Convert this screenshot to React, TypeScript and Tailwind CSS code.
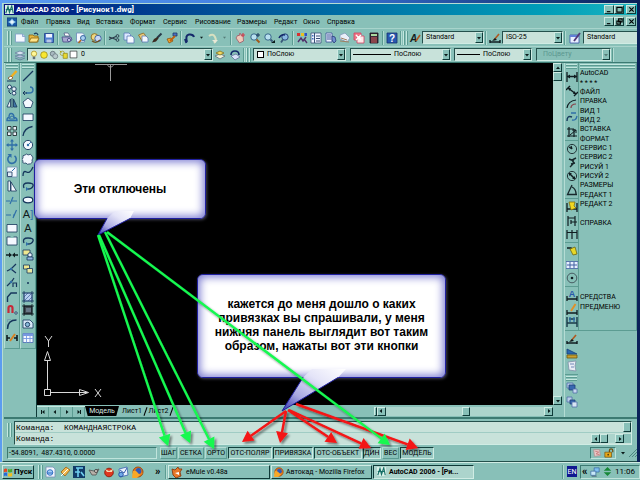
import React from 'react'

const N = '#16365c'
const B = '#2f6fa8'

const line = (d: string, c = N, w = 1.2) => <path d={d} stroke={c} strokeWidth={w} fill="none" />
const fill = (d: string, c: string, s = 'none') => <path d={d} fill={c} stroke={s} strokeWidth={0.8} />
const dot = (x: number, y: number, r: number, c: string, s = 'none') => (
  <circle cx={x} cy={y} r={r} fill={c} stroke={s} strokeWidth={0.9} />
)

const glyphs: Record<string, React.ReactNode> = {
  // standard toolbar
  new: <>{fill('M1.5 2h7l2.5 2.5V10h-9.5z', '#f4f8ff', '#7f9cc8')}{fill('M8.5 2v2.5H11', '#b8cce8', '#7f9cc8')}</>,
  open: <>{fill('M1 3h4l1 1h4v6H1z', '#e8b840', '#8a6410')}{fill('M3 6h8l-2 4H1z', '#ffe48a', '#8a6410')}{line('M6 2q3-2 4 1', N)}</>,
  save: <>{fill('M1.5 1.5h9v9h-9z', '#4f7fd0', '#1f3f88')}{fill('M3 2h6v3.5H3z', '#f0f4ff')}{fill('M3.5 7.5h5v3h-5z', '#b8c8e8')}</>,
  print: <>{fill('M3 1h4l2 3H4z', '#fff', '#56608a')}{fill('M1 5h9l1 3-3 2H2z', '#a8a8d0', '#4a4a88')}{dot(8, 8, 1.6, '#d0d0f0', '#4a4a88')}</>,
  preview: <>{fill('M1.5 1h6l2 2v7h-8z', '#f4f8ff', '#6a86b8')}{dot(8, 6, 2.5, '#a8d0f0', '#2a5a98')}{line('M6 8l-2.5 3', '#b06820', 1.6)}</>,
  publish: <>{dot(4.5, 5, 3.4, '#f0d880', '#8a6a20')}{dot(8, 6.5, 3.2, '#c8d8f8', '#3a5a98')}{line('M2 9q4 3 8-1', '#705020')}</>,
  cut: <>{line('M1 5l7 2.5M1 7.5L8 4.5', '#283848', 1.2)}{dot(9.5, 4, 1.4, 'none', '#283848')}{dot(9.5, 8, 1.4, 'none', '#283848')}</>,
  copy: <>{fill('M1 1h5l1.5 1.5V8H1z', '#dce8ff', '#5a7ab8')}{fill('M4 4h5l2 2v5H4z', '#f4f8ff', '#5a7ab8')}</>,
  paste: <>{fill('M1.5 3l5-2 4 5-5 4z', '#e8c878', '#8a6420')}{fill('M5 4h4l2 2v4H5z', '#f4f8ff', '#5a7ab8')}</>,
  match: <>{line('M10.5 1.5L6 6', '#283848', 2)}{fill('M6.5 5L3 7l-2 3.5 4-1 2.5-3z', '#3a2a20')}</>,
  blockedit: <>{fill('M1 7l4-1 2 3-4 2z', '#f0a830', '#8a5010')}{fill('M7 1h4v3H7z', '#4a70c0', '#20386a')}{line('M9 4L4 9', '#c06010', 1.8)}</>,
  undo: line('M3 10Q1 3 5 2.5T10 5M2.4 11L1 7', '#14286a', 2),
  redo: <>{line('M2 4q4-3 6 1t-1 6', '#d8e0c0', 2)}{fill('M5 8h6l-3 3z', '#e8e8d8')}</>,
  drop: fill('M4 5h4L6 7.5z', '#0a1a1a'),
  pan: <>{fill('M2 6l2-3 1 1 1-3 1.5 3L9 3l.5 6-4 2z', '#f0c8b8', '#a05868')}{line('M9 1v4M7 3h4', '#d04050')}</>,
  zoom: <>{dot(5, 5, 3.2, '#b8e0f0', '#2a5a80')}{line('M7.5 7.5l3 3', '#a05818', 1.8)}{line('M9 1v4M7 3h4', N, 1)}</>,
  zoomw: <>{dot(5, 5, 3.2, '#b8e0f0', '#2a5a80')}{line('M7.5 7.5l2 2', '#385878', 1.8)}{fill('M8 11h4V8z', '#0a1a1a')}</>,
  zoomp: <>{dot(7, 5, 3.2, '#88b8e0', '#203a70')}{line('M5 7.5l-2 3', '#385878', 1.8)}{line('M1 6q2-4 6-3', '#14286a', 1.5)}</>,
  props: <>{fill('M1 1h3v3H1z', '#d83030')}{fill('M5 1h3v3H5z', '#e8c020')}{fill('M8.5 1h2.500v3h-2.500z', '#3050c8')}{line('M2 10l3-4 2 3 3-4M8 7l3 4', '#50306a', 1.4)}</>,
  dcenter: <>{fill('M1 1h10v10H1z', '#eef4ff', '#3a5078')}{line('M4.500 1v10M6 4h4M6 6.500h4M6 9h4', '#3a5078', 1)}{fill('M2 3h1.500v1.500H2zM2 6h1.500v1.500H2z', '#4070c0')}</>,
  palette: <>{fill('M1 1h6v9H1z', '#eef4ff', '#3a5098')}{line('M2 3h4M2 5h4M2 7h4', '#3a5098', 1)}{fill('M7 4l3 1 1 4-2 2-2-3z', '#7090d0', '#2a3a78')}</>,
  sheet: <>{fill('M1 3l5-2 5 5-3 4-7-3z', '#e8eef8', '#8098b8')}{line('M2 6l6 2M1 9l9 1', '#a08060', 1)}</>,
  markup: <>{fill('M1 1h7v7H1z', '#f07888', '#d04060')}{fill('M4 4h7v7H4z', '#ffe8e8', '#d04060')}{line('M3 3l5 5M8 3L3 8', '#fff', 1.5)}</>,
  calc: <>{fill('M2 1h8v10H2z', '#3a2a38', '#1a1020')}{fill('M3 2h6v2H3z', '#a8d8a0')}{line('M3 6h6M3 8h6M3 10h6', '#d86060', 1)}</>,
  help: <>{fill('M1 1h10v10H1z', '#2858b0', '#143070')}<text x="6" y="10" textAnchor="middle" fontSize="10" fontWeight="700" fontFamily="Liberation Sans, sans-serif" fill="#fff">?</text></>,
  textstyle: <><text x="4.500" y="9.500" textAnchor="middle" fontSize="10" fontWeight="700" fontStyle="italic" fontFamily="Liberation Sans, sans-serif" fill="#101c20">A</text>{line('M11 3L7 9', '#b05820', 1.6)}</>,
  dimstyle: <>{line('M1 10h10M1 8v3M11 8v3', '#101c20', 1.4)}{line('M10 2L5 8', '#b05820', 1.6)}{fill('M3 9l3-3 2 2z', '#101c20')}</>,
  tablestyle: <>{fill('M1 3h9v8H1z', '#e8f0ff', '#3850a8')}{fill('M1 3h9v2H1z', '#6080d8')}{line('M11 1L5 9', '#503878', 1.8)}</>,
  // layers
  layers: <>{fill('M1 4l5-2 5 2-5 2z', '#d8e4f0', '#6880a0')}{fill('M1 7l5 2 5-2-5-1z', '#b8c8e0', '#6880a0')}{line('M1 9l5 2 5-2', '#6880a0', 1)}</>,
  bulb: <>{dot(6, 4.500, 3.200, '#fff898', '#a89020')}{fill('M4.500 8h3v3h-3z', '#607078')}</>,
  sun: dot(6, 6, 4, '#f8e830', '#988810'),
  freeze: <>{dot(4.500, 4.500, 3, '#a8b8c0', '#586870')}{dot(7.500, 7.500, 3, '#b8c8cc', '#687880')}</>,
  lock: <>{dot(4, 4, 2.600, 'none', '#a8a020')}{fill('M5 4h5v6H5z', '#e8d830', '#888010')}{line('M1 1l2 2', '#a8a020')}</>,
  swatch: fill('M1.500 1.500h9v9h-9z', '#fff', '#101818'),
  laycur: <>{fill('M1 7l5-2 5 2-5 3z', '#f0f0d8', '#607080')}{fill('M2 4l4-2 4 2-4 2z', '#f0d860', '#807020')}</>,
  layprev: <>{fill('M2 7l5-2 4 3-5 3z', '#d8e0f8', '#607098')}{line('M2 6q0-4 4-4t4 4', '#14286a', 1.600)}</>,
  // modify
  erase: <>{line('M10.500 1L5 7', '#f0b020', 2.400)}{fill('M2 8l3-2 2 2-3 2z', '#fff', '#805020')}{line('M1 11h9', N, 1)}</>,
  copyobj: <>{dot(3.500, 3, 2, '#e8f0f8', N)}{dot(8, 5, 2.200, '#e8f0f8', N)}{dot(8, 9.200, 1.900, '#e8f0f8', N)}{line('M3 6v2l2 2', N, 1)}</>,
  mirror: <>{fill('M4.500 2v8H1z', '#e8f0f8', N)}{fill('M7.500 2v8H11z', '#4078a8', N)}{line('M6 1v10', N, 0.800)}</>,
  offset: <>{line('M1 9.500h10q0-3-3-3 0-4-3-4-2 0-2 4-2 0-2 3z', B, 1.400)}{line('M3.500 8h5Q8 5 6 5T3.500 8', B, 1)}</>,
  array: <>{fill('M1.500 1.500h3.500v3.500H1.500zM7 1.500h3.500v3.500H7zM1.500 7h3.500v3.500H1.500zM7 7h3.500v3.500H7z', '#e8f0f8', '#101c20')}</>,
  move: <>{line('M6 1v10M1 6h10', B, 1.300)}{fill('M6 0l2 2.500H4zM6 12l2-2.500H4zM0 6l2.500-2v4zM12 6L9.500 4v4z', B)}</>,
  rotate: <>{line('M4 2.500A4.200 4.200 0 1 0 8.500 2.800', B, 1.600)}{fill('M1.500 1h4v4z', B)}</>,
  scale: <>{fill('M1 1h10v10H1z', '#f4f8ff', '#7090b0')}{fill('M1.500 6H6v4.500H1.500z', '#e0ecf8', N)}{line('M6 5l3-3', B, 1)}</>,
  stretch: <>{fill('M2 1h2.500v10H2z', '#e8f0f8', N)}{fill('M5 2l5.500 9H5z', '#f4f8ff', N)}</>,
  trim: line('M0 7h4M6 7h5M7 3L4 10', B, 1.200),
  extend: line('M0 7h5M7 7h2M10.500 2L7 10', B, 1.200),
  breakpt: fill('M1 2.500h10v7.500H1z', '#f4f8ff', N),
  breakobj: <>{fill('M1 2h10v8H1z', '#f4f8ff', N)}{fill('M4.500 1h3v2h-3z', '#88c0b8')}</>,
  join: <>{line('M0 6h4M8 6h4', '#101c20', 1.400)}{fill('M3 3.500L6 6 3 8.500zM9 3.500L6 6l3 2.500z', '#101c20')}</>,
  chamfer: <>{line('M1 8l4-2 5-5M5 6l5 4', N, 1.200)}{dot(5, 6, 1.200, B)}</>,
  peditr: <>{line('M1 9l5-5 2-3', N, 1.200)}{line('M7 10V6h3.500v4', N, 1.200)}{dot(5, 5, 1.200, B)}</>,
  chamf: line('M1.500 11V6L5 2h6', N, 1.400),
  magnet: <>{line('M2.500 9V4q0-2 2-2t2 2v5', '#c82838', 2.200)}{dot(10, 9, 1.200, '#e8f0f8', N)}</>,
  fillet: <>{line('M1.500 11q0-9 9-9', N, 1.500)}{line('M1.500 4V1.500H5', '#78a0b0', 1)}</>,
  explode: <>{line('M1 3v6M11 3v6M1 6h3M8 6h3', '#101c20', 1.600)}{line('M9 2L4 9', '#d88020', 2)}</>,
  // draw
  line: line('M1 11L11 1', N, 1.300),
  pline: <>{line('M4 9h3q4 0 4-3T8 3', B, 1.400)}{line('M1 9h4M1 9l2-2M1 9l2 2', N, 1)}</>,
  polygon: fill('M6 1l5 4-2 5.500H3L1 5z', '#f4f8ff', N),
  rect: fill('M1 3h10v6.500H1z', '#f4f8ff', N),
  arc: line('M1 11Q2 3 10.500 1.500', N, 1.300),
  circle: <>{dot(6, 6, 4.600, '#f4f8ff', N)}{dot(6, 6, 1.200, B)}{line('M6 6l3-3', B, 0.900)}</>,
  cloud: fill('M3 2q2-2 3 0 3-2 4 1 2 2 0 4 1 4-3 4-2 1-3-1-4 1-3-2-2-2 0-3-1-3 2-3z', '#f4f8ff', N),
  spline: line('M1 10q0-6 3.500-4T11 1', N, 1.300),
  earc: <>{line('M2 8Q0 3 6 3t5 3-5 3', N, 1.300)}{fill('M4 7l3 2-3 2z', B)}</>,
  ellipse: <ellipse cx="6" cy="6" rx="4.800" ry="2.800" fill="#f4f8ff" stroke={N} strokeWidth="1.200" />,
  insert: <>{fill('M1 1h7v5H1z', '#f0e890', N)}{dot(8, 6, 2.200, '#e8f0f8', N)}{fill('M5 8h6v3H5z', '#90b8e0', N)}</>,
  block: <>{fill('M1.500 2h6v4h-6z', '#f0e890', N)}{fill('M5 5.500h5.500v4.500H5z', '#e8e8a0', N)}</>,
  point: dot(6, 6, 1, N),
  hatch: <>{fill('M2 2h8v8H2z', '#b8d0f0', '#4a68a0')}{line('M2 6l4-4M2 10l8-8M6 10l4-4', '#4a68a0', 0.800)}{line('M0 2h12M0 10h12M2 0v12M10 0v12', N, 0.800)}</>,
  gradient: <>{fill('M2 2h8v8H2z', '#404850', '#101820')}{fill('M4 4h5v4H4z', '#687888')}{line('M0 2h12M0 10h12M2 0v12M10 0v12', '#101820', 0.800)}</>,
  region: <>{fill('M1 2h7l3 3v5H1z', '#d8e8f8', N)}{dot(5.500, 6.500, 2.200, '#88b8d8', N)}</>,
  table: <>{fill('M1 1.500h10v9H1z', '#f4f8ff', '#4868b0')}{fill('M1 1.500h10v2.500H1z', '#7898e0')}{line('M4.500 2v8.500M8 2v8.500M1 6.500h10', '#7898e0', 0.900)}</>,
  // dimension
  dlin: <>{line('M1 1v10M11 1v10M1 5.500h10', '#101c20', 1.300)}{fill('M1 5.500L4 3.500v4zM11 5.500L8 3.500v4z', '#101c20')}</>,
  dali: <>{line('M2 3l8 6M0 5l4-4M8 11l4-4', '#101c20', 1.400)}{fill('M2 3h3L3.500 6zM10 9H7l1.500-3z', '#101c20')}</>,
  darc: <>{line('M1 10Q2 3 10 2', '#101c20', 1.200)}{line('M5 10q0-4 5-4', '#884048', 1.200)}</>,
  dord: <>{line('M1 9q0-6 5-4', '#18385c', 1.400)}{line('M6 8q4 1 5-4M5 1l5 0', B, 1.300)}</>,
  dbase: <>{line('M3 1v10M1 3h7M8 3v8M1 10h10', '#101c20', 1.200)}{line('M4 9l6-5M6 4l4 0v3', '#101c20', 1)}</>,
  drad: <>{dot(6, 6, 4.600, 'none', '#18282c')}{line('M6 6L3 4M6 6l-1-3', '#101c20', 1.300)}</>,
  djog: line('M10 1L6 3l2 3-4 4M3 2l5 2M5 7l4-1', '#18282c', 1.400),
  ddia: <>{dot(6, 6, 4.600, 'none', '#18282c')}{line('M3 3l6 6', '#101c20', 1.500)}{fill('M3 3h3L3 6zM9 9H6l3-3z', '#101c20')}</>,
  dang: line('M6 1L1.500 10.500H11M6 3q4 2 4 7', '#18282c', 1.300),
  quick: <>{line('M1 2v9M11 2v9M1 8h10', '#101c20', 1.300)}{fill('M3 1h6l-1 4 2 2-5 2z', '#f0d820', '#807010')}</>,
  dcon: line('M2 1v10M9 1v4M2 3h7M5 7h6M9 5v6M5 9V5', '#101c20', 1.200),
  dchain: line('M1 2v9M6 2v9M11 2v9M1 4.500h10', '#101c20', 1.200),
  lead: <>{line('M1 3h4l5 6', '#101c20', 1.600)}{fill('M4 4l5-2 2 7-4 1z', '#e8d828', '#706810')}</>,
  tol: <>{fill('M0 2.500h12v7H0z', '#e8f0ff', '#4060a0')}{line('M4 3v6M8 3v6M1 6h10', '#4060a0', 1)}</>,
  cmark: <>{dot(6, 6, 4.800, 'none', '#405058')}{dot(6, 6, 1.300, '#101c20')}</>,
  dedit: <><text x="6" y="7.500" textAnchor="middle" fontSize="9" fontWeight="700" fontFamily="Liberation Sans, sans-serif" fill="#2858a8">A</text>{line('M1 7v5M11 7v5M1 10h10', '#101c20', 1.300)}</>,
  dtedit: <>{line('M1 7v5M11 7v5M1 10h10', '#101c20', 1.300)}{line('M9.500 1L5 8', '#e09028', 2)}</>,
  dupd: <>{line('M1 1v10M11 1v10M1 7h10M3 3h6', '#183848', 1.400)}{line('M4 1v5M8 1v5', B, 1.400)}</>,
  solid: <>{fill('M1 2v5h10z', '#2868b0', '#184078')}{fill('M1 8h10v3H1z', '#c8a030', '#705810')}</>,
  scroll: <>{fill('M2 2l8-1-1 5 1 5-7-1z', '#e8ecf4', '#8090a8')}{line('M4 4h4M5 7h3', '#7088b8', 1)}</>,
  front: <>{fill('M1 1h6v5H1z', '#b8cce8', '#5070a8')}{fill('M3 3h6v5H3z', '#3868b0', '#204078')}{fill('M7 7h4v4H7z', '#c8d8f0', '#5070a8')}</>,
  back: <>{fill('M1 1h5v5H1z', '#b8cce8', '#5070a8')}{fill('M4 4h5v4H4z', '#3868b0', '#204078')}{fill('M6 6h5v5H6z', '#d8e4f4', '#5070a8')}</>,
  // windows and tray
  acad: <>{fill('M0 0h12v12H0z', '#d8f0e8')}{line('M1 11L4 2l2 8 3-9 2 10M1 6h9', '#187068', 1.500)}</>,
  doc: <>{fill('M0 1h12v10H0z', '#1858a8', '#103868')}{line('M6 2v8M2 6h8', '#a8e0f8', 1.600)}{fill('M4 4h4v4H4z', '#e8f8ff')}</>,
  winflag: <>{fill('M1 3q2-2 4-.5V6Q3 5 1 6.500z', '#e84820')}{fill('M6 2.500q2 1 5-.5v4q-3 1-5 0z', '#48a830')}{fill('M1 7.500Q3 6 5 7v4q-2-1.500-4 0z', '#2868d8')}{fill('M6 7.500q2 1 5-.5v4q-3 1-5 0z', '#f0c020')}</>,
  ie: <>{fill('M2 1h7l2 2v8H2z', '#f0f4fc', '#7890b8')}{dot(6, 6.500, 2.800, '#a8d0f8', '#2868c0')}{line('M3 7h6', '#2868c0', 1)}</>,
  tag: <>{fill('M2 6l5-5 4 3-5 6z', '#f0b850', '#a06010')}{line('M2 10l7-7', '#fff', 1)}</>,
  fish: <>{fill('M0 0h12v12H0z', '#103a68')}{line('M3 2h7M5 2v9M2 6h5M8 6l3 4', '#70d0f0', 1.600)}</>,
  bird: <>{fill('M1 4l5 1 5-2-3 6-4 0z', '#b8b0a8', '#505050')}{dot(8, 5, 1.500, '#e8e0d8', '#404040')}</>,
  red: <>{dot(6, 6.500, 4.300, '#e03820', '#901808')}{fill('M2 3l4 2 4-2-1 3H4z', '#f8d8b0')}</>,
  mail: <>{fill('M2 3l8-2 1 8-8 2z', '#e8f0fc', '#3860b0')}{line('M3 4l4 3 3-5', '#3860b0', 1)}{dot(4, 8.500, 2.300, '#70a8e8', '#2050a0')}</>,
  fox: <>{dot(6, 6, 5, '#e87818', '#984008')}{dot(6.500, 5, 2.900, '#3058b8')}{fill('M1 5q3-1 5 2t5 0-5 4-5-6z', '#f8a828')}</>,
  emule: <>{fill('M1 3l3 1 3-3 1 2 3 0-2 3 1 4-5 2-3-3z', '#e87828', '#803008')}{fill('M4 7l4-1v3z', '#fff')}</>,
  seal: <>{fill('M2 2h7l1 7-7 1z', '#e8c8c8', '#b08888')}{line('M4 4l4 1-3 2 4 1', '#c87070', 1)}</>,
  padlock: <>{line('M6.500 6V3q0-2 2-2t2 2v2', '#705010', 1.500)}{fill('M1 5h8v6H1z', '#e8a818', '#705010')}{dot(5, 8, 1, '#503808')}</>,
  net: <>{fill('M5 1h6v5H5z', '#80c0f0', '#3060a0')}{fill('M1 5h6v5H1z', '#c8e8f8', '#3060a0')}{line('M2 11h6', '#506878')}</>,
  updown: fill('M6 0l5 5H1zM6 12L1 7h10z', '#188838'),
}

const Icon = ({ n, s = 'size-[12px]' }: { n: string; s?: string }) => (
  <svg viewBox="0 0 12 12" className={`${s} shrink-0`} aria-hidden="true">{glyphs[n]}</svg>
)

const raised = 'border border-t-[#d0ece4] border-l-[#d0ece4] border-b-[#0f3a38] border-r-[#0f3a38]'
const sunken = 'border border-t-[#3c7a72] border-l-[#3c7a72] border-b-[#c0e4dc] border-r-[#c0e4dc]'

const Tool = ({ n }: { n: string }) => (
  <button aria-label={n} className="flex min-h-0 min-w-0 flex-1 items-center justify-center"><Icon n={n} /></button>
)
const Group = ({ items, w }: { items: string[]; w: string }) => (
  <div className={`flex h-full shrink-0 ${w}`}>{items.map(n => <Tool key={n} n={n} />)}</div>
)
const Sep = () => <div className="mx-[1px] h-[14px] w-[2px] shrink-0 border-l border-r border-l-[#5c9c92] border-r-[#b4dcd4]" />
const Grip = () => (
  <div className="flex h-[14px] shrink-0 gap-[1px]">
    <i className="w-[2px] border-l border-r border-l-[#c4e8e0] border-r-[#5c9c92]" />
    <i className="w-[2px] border-l border-r border-l-[#c4e8e0] border-r-[#5c9c92]" />
  </div>
)
const HGrip = () => (
  <div className="mx-[1px] flex shrink-0 flex-col gap-[1px] pt-[1px]">
    <i className="h-[2px] border-t border-b border-t-[#c4e8e0] border-b-[#5c9c92]" />
    <i className="h-[2px] border-t border-b border-t-[#c4e8e0] border-b-[#5c9c92]" />
  </div>
)
const Tri = ({ d }: { d: string }) => (
  <svg viewBox="0 0 6 6" className="size-[6px]" aria-hidden="true"><path d={d} fill="#0a1a1a" /></svg>
)
const DOWN = 'M1 2h4L3 4.500z', UP = 'M1 4h4L3 1.500z', LEFT = 'M4 1v4L1.500 3z', RIGHT = 'M2 1v4l2.500-2z'

const Combo = ({ label, value, w, children, disabled }: {
  label: string; value: string; w: string; children?: React.ReactNode; disabled?: boolean
}) => (
  <label className={`flex h-[13px] items-center border border-t-[#24504c] border-l-[#24504c] border-b-[#d0ece4] border-r-[#d0ece4] ${w} ${disabled ? 'bg-[#88c0b8]' : 'bg-[#c8e2da]'}`}>
    {children}
    <select aria-label={label} disabled={disabled} className={`h-[11px] min-w-0 flex-1 appearance-none bg-transparent pl-[3px] leading-[11px] outline-none ${disabled ? 'text-[#5c9890]' : 'text-black'}`}>
      <option>{value}</option>
    </select>
    <span className={`flex h-[11px] w-[8px] shrink-0 items-center justify-center bg-[#88c0b8] ${raised}`}>
      {disabled ? <span className="opacity-40"><Tri d={DOWN} /></span> : <Tri d={DOWN} />}
    </span>
  </label>
)

const WinButtons = ({ mid }: { mid: string }) => (
  <div className="mr-[1px] ml-auto flex">
    {[['Свернуть', 'M1 6.500h4'], ['Развернуть', mid], ['Закрыть', 'M1.500 1.500l5 5M6.500 1.500l-5 5']].map(([l, d], i) => (
      <button key={l} aria-label={l} className={`flex h-[9px] w-[10px] items-center justify-center bg-[#88c0b8] ${raised} ${i === 2 ? 'ml-[2px]' : ''}`}>
        <svg viewBox="0 0 8 8" className="size-[7px]"><path d={d} stroke="#000" strokeWidth="1.300" fill="none" /></svg>
      </button>
    ))}
  </div>
)

const menus: [string, string][] = [
  ['Файл', 'w-[25px]'], ['Правка', 'w-[31px]'], ['Вид', 'w-[19px]'], ['Вставка', 'w-[34px]'], ['Формат', 'w-[33px]'],
  ['Сервис', 'w-[32px]'], ['Рисование', 'w-[42px]'], ['Размеры', 'w-[37px]'], ['Редакт', 'w-[29px]'], ['Окно', 'w-[24px]'], ['Справка', 'w-[34px]'],
]
const modify = ['erase', 'copyobj', 'mirror', 'offset', 'array', 'move', 'rotate', 'scale', 'stretch', 'trim', 'extend', 'breakpt', 'breakobj', 'join', 'chamfer', 'peditr', 'chamf', 'magnet', 'fillet', 'explode']
const draw = ['line', 'pline', 'polygon', 'rect', 'arc', 'circle', 'cloud', 'spline', 'earc', 'ellipse', 'A]', 'A', 'earc', 'insert', 'block', 'point', 'hatch', 'gradient', 'region', 'table']
const dims: [string, string[]][] = [
  ['h-[69px]', ['dlin', 'dali', 'darc', 'dord', 'dbase']],
  ['h-[55px]', ['drad', 'djog', 'ddia', 'dang']],
  ['h-[41px]', ['quick', 'dcon', 'dchain']],
  ['h-[41px]', ['lead', 'tol', 'cmark']],
  ['h-[41px]', ['dedit', 'dtedit', 'dupd']],
  ['h-[41px]', ['dimstyle', 'solid', 'scroll']],
]
const sideMenu = ['AutoCAD', '* * * *', 'ФАЙЛ', 'ПРАВКА', 'ВИД 1', 'ВИД 2', 'ВСТАВКА', 'ФОРМАТ', 'СЕРВИС 1', 'СЕРВИС 2', 'РИСУЙ 1', 'РИСУЙ 2', 'РАЗМЕРЫ', 'РЕДАКТ 1', 'РЕДАКТ 2', '', 'СПРАВКА', '', '', '', '', '', '', '', 'СРЕДСТВА', 'ПРЕДМЕНЮ']
const toggles: [string, string, boolean][] = [
  ['ШАГ', 'w-[17px]', false], ['СЕТКА', 'w-[26px]', false], ['ОРТО', 'w-[22px]', false], ['ОТС-ПОЛЯР', 'w-[44px]', true],
  ['ПРИВЯЗКА', 'w-[40px]', true], ['ОТС-ОБЪЕКТ', 'w-[48px]', true], ['ДИН', 'w-[18px]', true], ['ВЕС', 'w-[17px]', false], ['МОДЕЛЬ', 'w-[34px]', true],
]

const Column = ({ items }: { items: string[] }) => (
  <div className="flex h-[286px] w-[16px] flex-col border-r border-b border-l border-b-[#5c9c92] border-l-[#b4dcd4] border-r-[#5c9c92]">
    <HGrip />
    <div className="flex min-h-0 flex-1 flex-col pb-[3px]">
      {items.map((n, i) => glyphs[n]
        ? <Tool key={i} n={n} />
        : <button key={i} className="flex min-h-0 flex-1 items-center justify-center font-['Liberation_Sans',sans-serif] text-[11px] text-[#101c20]">{n === 'A]' ? <>A<span className="text-[#2f6fa8]">]</span></> : n}</button>)}
    </div>
  </div>
)

const ScrollBtn = ({ d, l }: { d: string; l: string }) => (
  <button aria-label={l} className={`flex size-[9px] shrink-0 items-center justify-center bg-[#88c0b8] ${raised}`}><Tri d={d} /></button>
)

const Toolbars = () => (
  <>
    <div className="flex h-[18px] shrink-0 items-center border-t border-t-[#a8d4cc] pl-[3px]">
      <Grip />
      <div className="w-[1px]" />
      <Group w="w-[43px]" items={['new', 'open', 'save']} /><Sep />
      <Group w="w-[43px]" items={['print', 'preview', 'publish']} /><Sep />
      <Group w="w-[72px]" items={['cut', 'copy', 'paste', 'match', 'blockedit']} /><Sep />
      <Group w="w-[14px]" items={['undo']} /><div className="flex w-[9px]"><Icon n="drop" s="size-[9px]" /></div>
      <Group w="w-[14px]" items={['redo']} /><div className="flex w-[9px] opacity-40"><Icon n="drop" s="size-[9px]" /></div>
      <Sep />
      <Group w="w-[58px]" items={['pan', 'zoom', 'zoomw', 'zoomp']} /><Sep />
      <Group w="w-[86px]" items={['props', 'dcenter', 'palette', 'sheet', 'markup', 'calc']} /><Sep />
      <Group w="w-[14px]" items={['help']} /><Sep />
      <Grip />
      <Group w="w-[14px]" items={['textstyle']} />
      <Combo label="Текстовый стиль" value="Standard" w="w-[62px]" />
      <Sep />
      <Group w="w-[14px]" items={['dimstyle']} />
      <Combo label="Размерный стиль" value="ISO-25" w="w-[61px]" />
      <Sep />
      <Group w="w-[16px]" items={['tablestyle']} />
      <label className="flex h-[13px] min-w-0 flex-1 items-center overflow-hidden border border-r-0 border-t-[#24504c] border-l-[#24504c] border-b-[#d0ece4] bg-[#c8e2da]">
        <select aria-label="Стиль таблиц" className="h-[11px] w-full appearance-none bg-transparent pl-[3px] leading-[11px] outline-none"><option>Standard</option></select>
      </label>
    </div>
    <div className="flex h-[17px] shrink-0 items-center border-t border-b border-t-[#a8d4cc] border-b-[#3c7a72] pl-[3px]">
      <Grip />
      <Group w="w-[15px]" items={['layers']} />
      <Combo label="Слой" value="0" w="w-[186px]">
        <span className="flex items-center pl-[1px]">
          <Icon n="bulb" s="size-[10px]" /><Icon n="sun" s="size-[10px]" /><Icon n="freeze" s="size-[10px]" /><Icon n="lock" s="size-[10px]" /><Icon n="swatch" s="size-[9px]" />
        </span>
      </Combo>
      <Group w="w-[29px]" items={['laycur', 'layprev']} />
      <Sep />
      <Grip />
      <div className="w-[2px]" />
      <Combo label="Цвет" value="ПоСлою" w="w-[93px]"><span className="ml-[3px] size-[7px] border border-black bg-white" /></Combo>
      <div className="w-[4px]" />
      <Combo label="Тип линий" value="ПоСлою" w="w-[101px]"><span className="ml-[2px] h-[1px] w-[38px] bg-black" /></Combo>
      <div className="w-[3px]" />
      <Combo label="Вес линий" value="ПоСлою" w="w-[78px]"><span className="ml-[2px] h-[1px] w-[23px] bg-black" /></Combo>
      <div className="w-[4px]" />
      <Combo label="Стиль печати" value="ПоЦвету" w="w-[75px]" disabled><span className="w-[3px]" /></Combo>
      <Sep />
    </div>
  </>
)

const Drawing = () => (
  <div className="flex min-w-0 flex-1 flex-col border-l border-l-[#0f3a38]">
    <div className="flex min-h-0 flex-1">
      <div className="flex min-w-0 flex-1 flex-col justify-between bg-black">
        <svg viewBox="0 0 34 22" className="ml-[58px] h-[22px] w-[34px]" aria-hidden="true">
          <path d="M0 1.500h32M15.500 1v17M12.500 2.500l3 2 3-2" stroke="#9a9a9a" fill="none" />
        </svg>
        <svg viewBox="0 0 62 68" className="mb-[4px] ml-[5px] h-[68px] w-[62px]" aria-hidden="true">
          <g stroke="#d8d8d8" fill="none">
            <path d="M2.500 56.500h6v6h-6zM5.500 56V27M9 59.500h36M2.500 27.500h6l-3-9zM37.500 56.500v6l9-3zM3 3l3.500 5L10 3M6.500 8v6M53 56l6 8M59 56l-6 8" />
          </g>
        </svg>
      </div>
      <div className="flex w-[9px] flex-col bg-[#acd4cc]">
        <ScrollBtn l="Вверх" d={UP} />
        <div className={`h-[9px] bg-[#88c0b8] ${raised}`} />
        <div className="flex-1" />
        <ScrollBtn l="Вниз" d={DOWN} />
      </div>
    </div>
    <div className="flex h-[12px] items-center">
      <div className="flex w-[48px] border-t border-t-[#c4e8e0]">
        {[['Первый', 'M4.500 1v4L2 3zM1 1h1v4H1z'], ['Назад', LEFT], ['Вперёд', RIGHT], ['Последний', 'M1.500 1v4L4 3zM4 1h1v4H4z']].map(([l, d]) => (
          <button key={l} aria-label={l} className="flex h-[10px] flex-1 items-center justify-center border-r border-r-[#5c9c92]"><Tri d={d} /></button>
        ))}
      </div>
      <button className="h-[10px] w-[34px] bg-black text-center leading-[10px] text-[#d8e8e4] [clip-path:polygon(0_0,100%_0,92%_100%,8%_100%)]">Модель</button>
      <button className="h-[10px] w-[26px] text-center leading-[10px]">Лист1</button>
      <span className="h-[9px] w-[1px] rotate-[20deg] bg-black" />
      <button className="h-[10px] w-[25px] text-center leading-[10px]">Лист2</button>
      <span className="h-[9px] w-[1px] rotate-[20deg] bg-black" />
      <div className="flex min-w-0 flex-1 justify-end">
        <div className="flex w-[46%] bg-[#acd4cc]">
          <div className={`w-[3px] bg-[#88c0b8] ${raised}`} />
          <ScrollBtn l="Влево" d={LEFT} />
          <div className="flex-1" />
          <div className={`w-[8px] bg-[#88c0b8] ${raised}`} />
          <div className="w-[74px]" />
          <ScrollBtn l="Вправо" d={RIGHT} />
        </div>
        <div className="w-[9px]" />
      </div>
    </div>
  </div>
)

const DimBar = () => (
  <div className="ml-[2px] flex w-[14px] flex-col border-l border-l-[#b4dcd4]">
    <HGrip />
    <div className="flex flex-col divide-y-[1px] divide-[#5c9c92] border-b border-b-[#5c9c92]">
      {dims.map(([h, items], i) => (
        <div key={i} className="flex flex-col py-[1px]"><div className={`flex flex-col ${h}`}>{items.map(n => <Tool key={n} n={n} />)}</div></div>
      ))}
    </div>
    <HGrip />
    <div className="flex h-[28px] flex-col"><Tool n="front" /><Tool n="back" /></div>
  </div>
)

const SideMenu = () => (
  <nav className="flex h-[268px] w-[59px] flex-col border-r border-b border-l border-b-[#5c9c92] border-l-[#5c9c92] border-r-[#5c9c92]">
    <HGrip />
    <ul className="flex h-[243px] flex-col pl-[1px]">
      {sideMenu.map((t, i) => <li key={i} className="flex min-h-0 flex-1 items-center leading-[9px] whitespace-nowrap">{t && <button>{t}</button>}</li>)}
    </ul>
  </nav>
)

const Command = () => (
  <div className="flex h-[28px] shrink-0 items-stretch border-t-[2px] border-t-[#3c7a72] pt-[2px] pr-[5px] pl-[3px]">
    <div className="mt-[2px] mr-[2px] flex"><Grip /></div>
    <div className="flex min-w-0 flex-1 flex-col border border-t-[#24504c] border-l-[#24504c] border-b-[#d0ece4] border-r-[#d0ece4] bg-[#c8e2da] font-['Liberation_Mono',monospace] text-[8px]">
      <div className="flex h-[11px] border-b border-b-[#a0ccc4]">
        <output className="flex-1 pl-[1px] leading-[11px] whitespace-pre">Команда:  КОМАНДНАЯСТРОКА</output>
        <div className={`w-[8px] bg-[#88c0b8] ${raised}`} />
      </div>
      <div className="flex h-[11px] items-center">
        <label htmlFor="cmd" className="pl-[1px] leading-[11px]">Команда:</label>
        <input id="cmd" className="h-[10px] min-w-0 flex-1 bg-transparent pl-[3px] outline-none" />
        <div className="flex w-[40px] bg-[#b4d8d0]">
          <ScrollBtn l="Влево" d={LEFT} /><div className={`w-[8px] bg-[#88c0b8] ${raised}`} /><div className="flex-1 bg-[#acd4cc]" /><ScrollBtn l="Вправо" d={RIGHT} /><div className="w-[7px] bg-[#88c0b8]" />
        </div>
      </div>
    </div>
  </div>
)

const Status = () => (
  <div className="flex h-[16px] shrink-0 items-center pl-[3px]">
    <div className={`h-[12px] w-[150px] shrink-0 pl-[1px] leading-[10px] whitespace-pre ${sunken}`}>-54.8091,  487.4310, 0.0000</div>
    <div className="ml-[3px] flex gap-[1px]">
      {toggles.map(([t, w, on]) => (
        <button key={t} aria-pressed={on} className={`flex h-[12px] items-center justify-center leading-[10px] whitespace-nowrap ${w} ${on ? 'border border-t-[#12403c] border-l-[#12403c] border-b-[#d0ece4] border-r-[#d0ece4] bg-[#98c8c0]' : 'border border-t-[#b4dcd4] border-l-[#b4dcd4] border-b-[#5c9c92] border-r-[#5c9c92]'}`}>{t}</button>
      ))}
    </div>
    <div className="ml-auto flex items-center">
      <div className={`flex gap-[2px] px-[1px] ${sunken}`}><Icon n="seal" s="size-[10px]" /><Icon n="padlock" s="size-[10px]" /></div>
      <span className="ml-[4px]"><Tri d={DOWN} /></span>
      <svg viewBox="0 0 8 8" className="ml-[3px] size-[8px]"><path d="M0 8l8-8M3 8l5-5M6 8l2-2" stroke="#4c8880" /></svg>
    </div>
  </div>
)

const Taskbar = () => (
  <footer className="flex h-[18px] shrink-0 items-center border-t border-t-[#d0ece4] bg-[#88c0b8] pl-[2px]">
    <button className={`flex h-[14px] w-[32px] shrink-0 items-center gap-[1px] text-[8px] font-bold ${raised}`}><Icon n="winflag" s="size-[10px]" />Пуск</button>
    <div className="ml-[4px] flex"><Grip /></div>
    <div className="flex w-[102px]">{['ie', 'tag', 'fish', 'bird', 'red', 'mail', 'fox'].map(n => <Tool key={n} n={n} />)}</div>
    <span className="ml-[10px] w-[9px] text-[11px] font-bold">»</span>
    <Sep />
    <button className={`flex h-[14px] w-[102px] items-center gap-[3px] pl-[2px] whitespace-nowrap ${raised}`}><Icon n="emule" />eMule v0.48a</button>
    <button className={`ml-[1px] flex h-[14px] w-[101px] items-center gap-[2px] pl-[2px] whitespace-nowrap ${raised}`}><Icon n="fox" s="size-[10px]" />Автокад - Mozilla Firefox</button>
    <button className="ml-[1px] flex h-[14px] w-[101px] items-center gap-[3px] border border-t-[#0f3a38] border-l-[#0f3a38] border-b-[#d0ece4] border-r-[#d0ece4] bg-[#acd4cc] pl-[3px] font-bold whitespace-nowrap"><Icon n="acad" s="size-[9px]" />AutoCAD 2006 - [Ри...</button>
    <div className="ml-auto flex items-center">
      <Sep />
      <span className="mr-[3px] ml-[2px] flex h-[11px] w-[10px] items-center justify-center bg-[#101890] text-white">EN</span>
      <div className={`flex h-[14px] w-[60px] items-center justify-between pr-[4px] pl-[1px] ${sunken}`}>
        <span className="text-[11px] font-bold">«</span><Icon n="net" s="size-[10px]" /><Icon n="updown" s="size-[9px]" /><time className="text-[8px]">11:06</time>
      </div>
    </div>
  </footer>
)

type Pt = [number, number]
const green: [Pt, Pt][] = [[[98, 235], [168, 446]], [[99, 235], [190, 443]], [[105, 232], [214, 449]], [[107, 232], [390, 445]]]
const red: [Pt, Pt][] = [[[286, 411], [242, 442]], [[286, 411], [280, 443]], [[288, 410], [337, 443]], [[289, 410], [371, 448]], [[296, 404], [418, 448]]]

const Arrow = ({ from, to, color }: { from: Pt; to: Pt; color: string }) => {
  const len = Math.hypot(to[0] - from[0], to[1] - from[1])
  const ux = (to[0] - from[0]) / len
  const uy = (to[1] - from[1]) / len
  const bx = to[0] - ux * 11
  const by = to[1] - uy * 11
  return (
    <g>
      <path d={`M${from[0]} ${from[1]}L${bx} ${by}`} stroke={color} strokeWidth="2.400" />
      <path d={`M${to[0]} ${to[1]}L${bx - uy * 6} ${by + ux * 6}L${bx + uy * 6} ${by - ux * 6}z`} fill={color} />
    </g>
  )
}

const bubble = 'absolute flex items-center justify-center rounded-[6px] border border-[#2020a0] bg-white text-center text-[12px] leading-[14px] font-bold text-black shadow-[inset_0_0_8px_2px_#7878d0,1px_1px_3px_#404050]'

const Annotations = () => (
  <div className="pointer-events-none absolute top-0 left-0 h-[480px] w-[640px] font-['Liberation_Sans',sans-serif]">
    <p className={`${bubble} top-[159px] left-[34px] h-[60px] w-[172px]`}>Эти отключены</p>
    <p className={`${bubble} top-[274px] left-[197px] h-[104px] w-[249px] pb-[3px]`}>
      кажется до меня дошло о каких<br />привязках вы спрашивали, у меня<br />нижняя панель выглядит вот таким<br />образом, нажаты вот эти кнопки
    </p>
    <svg viewBox="0 0 640 480" className="absolute inset-0 size-full" aria-hidden="true">
      <defs>
        <linearGradient id="tail" x1="1" y1="0" x2="0" y2="1">
          <stop offset="0" stopColor="#fff" /><stop offset=".35" stopColor="#e4e4f8" /><stop offset=".7" stopColor="#a8a8e0" /><stop offset="1" stopColor="#3030b0" />
        </linearGradient>
        <filter id="cast" x="-5%" y="-5%" width="110%" height="115%"><feDropShadow dx="2" dy="2" stdDeviation="1" floodColor="#000" floodOpacity=".45" /></filter>
      </defs>
      <path d="M115 211L107 218.500L98 235L130 218.500L134 211z" fill="url(#tail)" />
      <path d="M107 218.500L98 235L130 218.500" fill="none" stroke="#2020a0" />
      <path d="M312 369L303 377.500L282 411L338 377.500L346 369z" fill="url(#tail)" />
      <path d="M303 377.500L282 411L338 377.500" fill="none" stroke="#2020a0" />
      <g filter="url(#cast)">
        {red.map(([a, b], i) => <Arrow key={i} from={a} to={b} color="#f41414" />)}
        {green.map(([a, b], i) => <Arrow key={i} from={a} to={b} color="#14f850" />)}
      </g>
    </svg>
  </div>
)

export default function App() {
  return (
    <div className="relative flex min-h-screen w-full flex-col overflow-hidden bg-[#88c0b8] font-['Roboto','Liberation_Sans',sans-serif] text-[7px] leading-[10px] text-black">
      <div className="flex flex-1 bg-linear-to-r from-[#5c9cf0] via-[#3c78dc] to-[#0a2058] pt-[3px] pr-[3px] pl-[2px]">
        <main className="flex min-w-0 flex-1 flex-col border-t border-b border-l border-t-[#b4dcd4] border-b-[#24504c] border-l-[#b4dcd4] bg-[#88c0b8] pl-[1px]">
          <header className="flex h-[11px] shrink-0 items-center gap-[2px] bg-linear-to-r from-[#081080] to-[#18b4c0] pl-[1px] text-white">
            <Icon n="acad" s="size-[9px]" />
            <h1 className="text-[8px] font-bold">AutoCAD 2006 - [Рисунок1.dwg]</h1>
            <WinButtons mid="M1 1.500h6v5.500H1z" />
          </header>
          <div className="flex h-[13px] shrink-0 items-center pl-[3px]">
            <Icon n="doc" s="size-[10px]" />
            <div className="ml-[4px] flex">
              {menus.map(([t, w]) => <button key={t} className={`text-left ${w}`}>{t}</button>)}
            </div>
            <WinButtons mid="M3 1h4v3.500H3zM1 3.500h4V7H1z" />
          </div>
          <Toolbars />
          <div className="flex min-h-0 flex-1">
            <Column items={modify} />
            <Column items={draw} />
            <Drawing />
            <DimBar />
            <SideMenu />
          </div>
          <Command />
          <Status />
        </main>
      </div>
      <Taskbar />
      <Annotations />
    </div>
  )
}
